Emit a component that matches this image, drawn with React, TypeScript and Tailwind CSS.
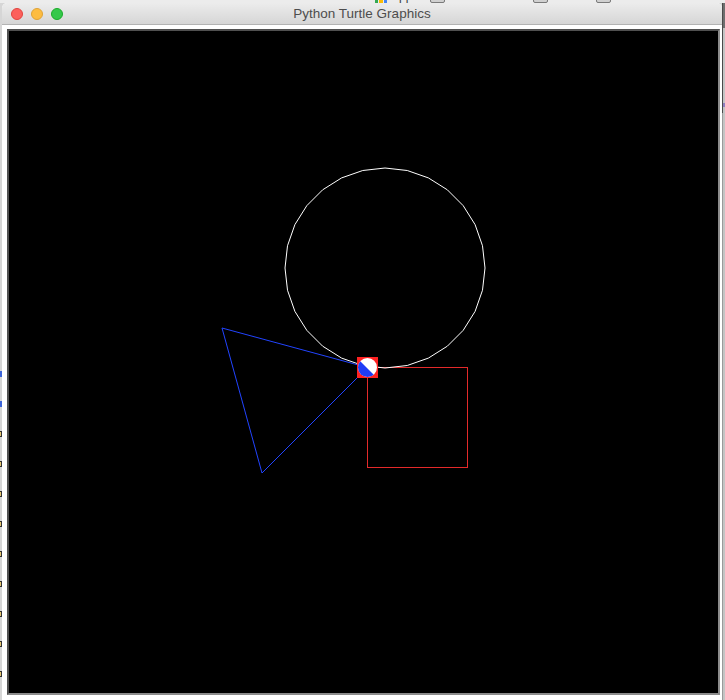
import React from "react";

const CENTER = { x: 385, y: 268 };
const RADIUS = 100;
const STEPS = 28;

// turtle's circle() is a polygon, not a true circle
const circlePoints = Array.from({ length: STEPS }, (_, k) => {
  const a = Math.PI / 2 + (k * 2 * Math.PI) / STEPS;
  return `${(CENTER.x + RADIUS * Math.cos(a)).toFixed(2)},${(CENTER.y + RADIUS * Math.sin(a)).toFixed(2)}`;
}).join(" ");

const bookmarks = [
  { label: "Apps", gap: "ml-[375px]", apps: true },
  { label: "New folder", gap: "ml-[12px]" },
  { label: "Hover", gap: "ml-[26px]" },
  { label: "MOOCS AI & ML", gap: "ml-[12px]" },
];

const BookmarkStrip = () => (
  <div className="h-[3px] overflow-hidden bg-[#ececec]">
    <div className="-mt-[10px] flex h-[13px] items-end text-[12px] leading-[13px] text-[#3a3a3a]">
      {bookmarks.map((b) => (
        <div key={b.label} className={`flex shrink-0 items-end gap-[4px] ${b.gap}`}>
          {b.apps ? (
            <div className="grid h-[12px] w-[12px] grid-cols-3 gap-px">
              <span className="bg-[#4285f4]" />
              <span className="bg-[#ea4335]" />
              <span className="bg-[#fbbc05]" />
              <span className="bg-[#34a853]" />
              <span className="bg-[#ea4335]" />
              <span className="bg-[#fbbc05]" />
              <span className="bg-[#34a853]" />
              <span className="bg-[#fbbc05]" />
              <span className="bg-[#4285f4]" />
            </div>
          ) : (
            <div className="h-[12px] w-[15px] rounded-[2px] border border-[#7a7a7a] bg-[#d0d0d0]" />
          )}
          <span className="whitespace-nowrap">{b.label}</span>
        </div>
      ))}
    </div>
  </div>
);

const LeftStrip = () => (
  <div className="flex w-[2px] flex-col bg-[#d6d6d6]">
    <div className="mt-[368px] h-[6px] bg-[#3c64d8]" />
    <div className="mt-[24px] h-[6px] bg-[#3c64d8]" />
    <div className="mt-[24px] flex flex-col gap-[24px]">
      {Array.from({ length: 9 }, (_, i) => (
        <div key={i} className="h-[6px] border-y border-r border-[#333] bg-[#e8c870]" />
      ))}
    </div>
  </div>
);

const RightStrip = () => (
  <div className="flex w-[3px]">
    <div className="flex w-px flex-col bg-[#9a9a9a]">
      <div className="h-[110px] bg-[#4a4a4a]" />
    </div>
    <div className="flex flex-1 flex-col bg-[#c4c4c4]">
      <div className="h-[25px] bg-[#6e6e6e]" />
      <div className="mt-[75px] h-[4px] bg-[#8f7fc0]" />
    </div>
  </div>
);

const TitleBar = () => (
  <div className="grid h-[22px] grid-cols-[1fr_auto_1fr] items-center border-b border-[#b3b3b3] bg-gradient-to-b from-[#ececec] to-[#d6d6d6]">
    <div className="flex gap-[8px] pl-[9px] pt-px">
      <span className="h-[12px] w-[12px] rounded-full border border-[#e0443e] bg-[#fc605c]" />
      <span className="h-[12px] w-[12px] rounded-full border border-[#dea236] bg-[#fdbc40]" />
      <span className="h-[12px] w-[12px] rounded-full border border-[#1aab29] bg-[#34c84a]" />
    </div>
    <span className="pt-px text-[13.5px] leading-none text-[#4d4d4d]">Python Turtle Graphics</span>
    <div />
  </div>
);

const TurtleCanvas = () => (
  <svg width={709} height={662} viewBox="9 31 709 662" className="block">
    <defs>
      <clipPath id="shell">
        <circle cx={367.5} cy={367.5} r={9.5} />
      </clipPath>
    </defs>
    <rect x={367.5} y={367.5} width={100} height={100} fill="none" stroke="#e42a2a" strokeWidth={1} />
    <polygon points={circlePoints} fill="none" stroke="#ffffff" strokeWidth={1} />
    <polygon points="222,328 262,473 367.5,367.5" fill="none" stroke="#2244ff" strokeWidth={1} />
    <rect x={357} y={357} width={21} height={21} fill="#ff2222" />
    <circle cx={367.5} cy={367.5} r={9.5} fill="#ffffff" />
    <polygon points="357,358 377,378 357,378" fill="#1f3cf5" clipPath="url(#shell)" />
  </svg>
);

const Window = () => (
  <div className="flex flex-1 flex-col overflow-hidden rounded-t-[5px] bg-white">
    <TitleBar />
    <div className="pb-[5px] pl-[5px] pr-[2px] pt-[4px]">
      <div className="border-2 border-b-[#8c8c8c] border-l-[#505050] border-r-[#8c8c8c] border-t-[#505050] bg-black">
        <TurtleCanvas />
      </div>
    </div>
  </div>
);

export default function App() {
  return (
    <div className="flex h-[700px] w-[725px] flex-col overflow-hidden bg-[#d6d6d6] font-['Liberation_Sans',Arial,sans-serif]">
      <BookmarkStrip />
      <div className="flex flex-1">
        <LeftStrip />
        <Window />
        <RightStrip />
      </div>
    </div>
  );
}
